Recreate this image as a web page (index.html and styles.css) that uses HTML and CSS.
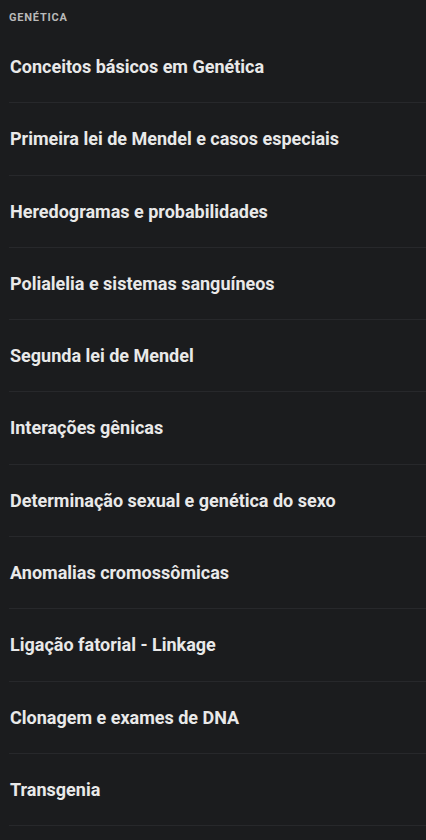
FILE: index.html
```html
<!DOCTYPE html>
<html lang="pt">
<head>
<meta charset="utf-8">
<link rel="stylesheet" href="styles.css">
</head>
<body>
<section class="topics">
  <h2 class="topics-title">GENÉTICA</h2>
  <ul class="topic-list">
    <li class="topic">Conceitos básicos em Genética</li>
    <li class="topic">Primeira lei de Mendel e casos especiais</li>
    <li class="topic">Heredogramas e probabilidades</li>
    <li class="topic">Polialelia e sistemas sanguíneos</li>
    <li class="topic">Segunda lei de Mendel</li>
    <li class="topic">Interações gênicas</li>
    <li class="topic">Determinação sexual e genética do sexo</li>
    <li class="topic">Anomalias cromossômicas</li>
    <li class="topic">Ligação fatorial - Linkage</li>
    <li class="topic">Clonagem e exames de DNA</li>
    <li class="topic">Transgenia</li>
  </ul>
</section>
</body>
</html>
```

FILE: styles.css
```css
html, body {
  margin: 0;
  padding: 0;
  background: #1b1c1e;
}
body {
  font-family: Roboto, "Noto Sans", sans-serif;
  color: #e9e9e9;
}
.topics {
  padding-left: 9px;
}
.topics-title {
  margin: 0;
  padding: 10px 0 0;
  height: 21px;
  font-size: 11px;
  line-height: 15px;
  font-weight: 700;
  color: #b9b9b9;
  letter-spacing: 0.8px;
}
.topic-list {
  list-style: none;
  margin: 0;
  padding: 0;
}
.topic {
  padding: 24px 0 23.3px 1px;
  line-height: 24px;
  font-size: 18px;
  font-weight: 700;
  border-bottom: 1px solid #27282b;
}
```
